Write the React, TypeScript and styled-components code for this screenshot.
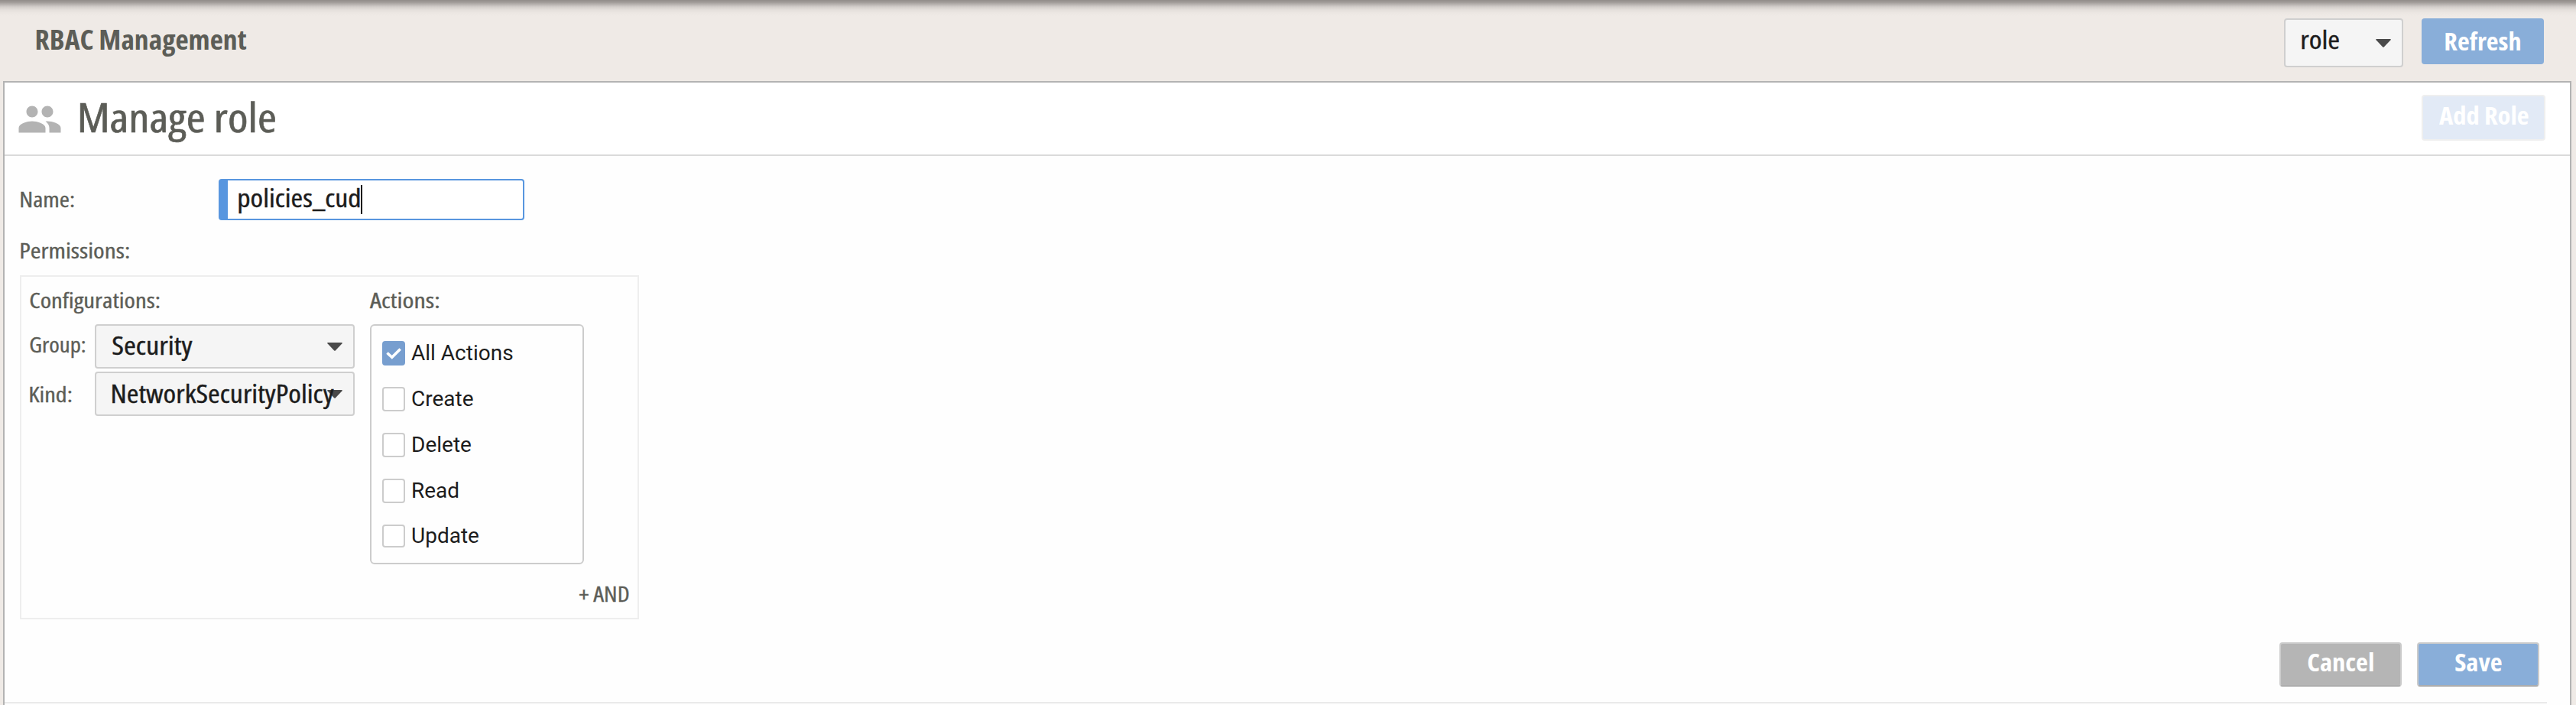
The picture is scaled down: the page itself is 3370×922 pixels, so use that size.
import React, { useLayoutEffect, useRef, useState } from 'react';
import styled, { createGlobalStyle, css } from 'styled-components';

const GlobalStyle = createGlobalStyle`
  *, *::before, *::after { box-sizing: border-box; }
  html, body { margin: 0; padding: 0; }
  body {
    background: #efeae6;
    color: #5c5d57;
    font-family: 'Open Sans', 'Noto Sans', sans-serif;
    overflow: hidden;
  }
`;

/* ---------- condensed text ---------- */

const Slot = styled.span<{ $width: number; $lift?: number }>`
  display: block;
  flex: none;
  width: ${(p) => p.$width}px;
  padding-bottom: ${(p) => p.$lift ?? 0}px;
  white-space: nowrap;
`;

const Glyphs = styled.span<{ $size: number; $weight: number }>`
  display: block;
  width: max-content;
  font-size: ${(p) => p.$size}px;
  font-weight: ${(p) => p.$weight};
  font-stretch: condensed;
  line-height: 1.3;
  transform-origin: 0 0;
  -webkit-text-stroke: ${(p) => (p.$weight < 600 ? p.$size * 0.012 : 0)}px currentColor;
`;

interface CondensedProps {
  children: string;
  width: number;
  size?: number;
  weight?: number;
  lift?: number;
}

/* Sets a line of text so that its glyphs span exactly `width` pixels. */
function Condensed({ children, width, size = 28, weight = 500, lift }: CondensedProps) {
  const ref = useRef<HTMLSpanElement>(null);
  const [fit, setFit] = useState({ scale: 1, left: 0 });

  useLayoutEffect(() => {
    const ctx = document.createElement('canvas').getContext('2d');
    if (!ctx || !ref.current) return;
    ctx.font = `${weight} ${size}px ${getComputedStyle(ref.current).fontFamily}`;
    const plain = ctx.measureText(children);
    const ratio = ref.current.offsetWidth / plain.width;
    const ink = (plain.actualBoundingBoxLeft + plain.actualBoundingBoxRight) * ratio;
    setFit({ scale: width / ink, left: plain.actualBoundingBoxLeft * ratio });
  }, [children, width, size, weight]);

  return (
    <Slot $width={width} $lift={lift}>
      <Glyphs
        ref={ref}
        $size={size}
        $weight={weight}
        style={{ transform: `scaleX(${fit.scale}) translateX(${fit.left}px)` }}
      >
        {children}
      </Glyphs>
    </Slot>
  );
}

/* ---------- page ---------- */

const Page = styled.div`
  display: flex;
  flex-direction: column;
  height: 922px;
  padding: 0 6px 0 4px;
  background: linear-gradient(
      to bottom,
      #918c89 0,
      #a09b98 3px,
      #b9b4b1 6px,
      #d3cecb 9px,
      #e4dfdb 13px,
      #ece7e3 17px,
      #efeae6 21px
    )
    #efeae6;
`;

const TopBar = styled.header`
  display: flex;
  flex: none;
  justify-content: space-between;
  height: 106px;
  padding: 24px 36px 0 44px;
`;

const TitleSlot = styled.div`
  display: flex;
  align-items: center;
  height: 56px;
`;

const TopActions = styled.div`
  display: flex;
  align-items: flex-start;
  gap: 24px;
`;

const Panel = styled.main`
  flex: 1;
  min-height: 0;
  background: #fefefe;
  border: 2px solid #b3b3b3;
  border-bottom: 0;
`;

const PanelHeader = styled.div`
  display: flex;
  align-items: flex-start;
  justify-content: space-between;
  height: 96px;
  padding: 16px 32px 0 16px;
  background: #fff;
  border-bottom: 2px solid #dadada;
`;

const PanelTitle = styled.div`
  display: flex;
  align-items: center;
  gap: 23px;
  height: 64px;
`;

const PeopleIcon = styled.svg`
  display: block;
  width: 60px;
  height: 60px;
  fill: #b3b3b3;
`;

const Form = styled.div`
  display: flex;
  flex-direction: column;
  width: 3326px;
  height: 716px;
  border-bottom: 2px solid #eaeaea;
`;

/* ---------- controls ---------- */

type Tone = 'primary' | 'outlined' | 'neutral' | 'disabled';

const tones = {
  primary: css`
    background: #89aed9;
  `,
  outlined: css`
    background: #89aed9;
    border: 2px solid #cbcbcb;
    border-bottom-color: #adadad;
  `,
  neutral: css`
    background: #b5b5b5;
    border: 2px solid #cbcbcb;
    border-bottom-color: #adadad;
  `,
  disabled: css`
    background: #e2eaf6;
    border: 2px solid #efefef;
  `,
};

const Button = styled.button<{ $tone: Tone; $width?: number; $height?: number }>`
  display: flex;
  align-items: center;
  justify-content: center;
  width: ${(p) => p.$width ?? 160}px;
  height: ${(p) => p.$height ?? 60}px;
  padding: 0;
  border: 0;
  border-radius: 4px;
  color: #fff;
  font-family: inherit;
  ${(p) => tones[p.$tone]}
`;

const SelectBox = styled.div<{ $width: number; $height: number }>`
  display: flex;
  align-items: center;
  justify-content: space-between;
  width: ${(p) => p.$width}px;
  height: ${(p) => p.$height}px;
  padding: 0 14px 0 21px;
  background: #f5f5f5;
  border: 2px solid #cfcfcf;
  border-radius: 4px;
  color: #1c1c1c;
`;

const Arrow = styled.svg`
  display: block;
  flex: none;
  width: 20px;
  height: 11px;
  margin-left: -20px;
  fill: #4a4a4a;
`;

const Caret = () => (
  <Arrow viewBox="0 0 20 11">
    <path d="M1 0h18q1.4.2.5 1.3L10.8 10.4q-.8.8-1.6 0L.5 1.3Q-.4.2 1 0z" />
  </Arrow>
);

const NameRow = styled.div`
  display: flex;
  align-items: center;
  height: 54px;
  margin-top: 30px;
  padding-left: 21px;
`;

const NameInput = styled.div`
  display: flex;
  align-items: center;
  width: 400px;
  height: 54px;
  margin-left: 189px;
  padding-left: 14px;
  background: #fff;
  border: 2px solid #5896df;
  border-left-width: 12px;
  border-radius: 4px;
  color: #1c1c1c;
`;

const Cursor = styled.i`
  width: 2px;
  height: 38px;
  margin-left: 1px;
  background: #111;
`;

const PermissionsRow = styled.div`
  display: flex;
  align-items: center;
  height: 72px;
  padding: 8px 0 0 21px;
`;

const PermissionBox = styled.section`
  display: flex;
  flex-direction: column;
  justify-content: space-between;
  width: 810px;
  height: 450px;
  margin-left: 20px;
  border: 2px solid #eee;
`;

const Columns = styled.div`
  display: flex;
`;

const ConfigColumn = styled.div`
  width: 456px;
  padding-left: 11px;
`;

const Heading = styled.div`
  display: flex;
  align-items: center;
  height: 62px;
`;

const ConfigRow = styled.div`
  display: flex;
  align-items: center;
  height: 58px;
  margin-bottom: 4px;
`;

const ConfigLabel = styled.div`
  width: 85px;
`;

const ActionsList = styled.div`
  width: 280px;
  height: 314px;
  padding: 20px 14px;
  border: 2px solid #ccc;
  border-radius: 6px;
`;

const ActionRow = styled.div`
  display: flex;
  align-items: flex-start;
  gap: 8px;
  height: 60px;
  color: #1c1c1c;
  font-family: Roboto, sans-serif;
  font-size: 28px;
  line-height: 32px;

  &:last-child {
    line-height: 30px;
  }
`;

const Box = styled.span<{ $checked: boolean; $short: boolean }>`
  display: flex;
  align-items: center;
  justify-content: center;
  width: 30px;
  height: ${(p) => (p.$short ? 30 : 32)}px;
  border: 2px solid ${(p) => (p.$checked ? '#779ecf' : '#ccc')};
  border-radius: 4px;
  background: ${(p) => (p.$checked ? '#779ecf' : '#fff')};
`;

const Check = styled.svg`
  display: block;
  flex: none;
  width: 20px;
  height: 15px;
  fill: none;
  stroke: #fff;
  stroke-width: 3.6;
`;

const AndRow = styled.div`
  display: flex;
  justify-content: flex-end;
  padding: 0 11px 14px 0;
`;

const Footer = styled.div`
  display: flex;
  justify-content: flex-end;
  gap: 20px;
  margin-top: 30px;
  padding-right: 10px;
`;

const actions: { name: string; checked?: boolean }[] = [
  { name: 'All Actions', checked: true },
  { name: 'Create' },
  { name: 'Delete' },
  { name: 'Read' },
  { name: 'Update' },
];

export default function App() {
  return (
    <>
      <GlobalStyle />
      <Page>
        <TopBar>
          <TitleSlot>
            <Condensed width={274} size={36} weight={700}>RBAC Management</Condensed>
          </TitleSlot>
          <TopActions>
            <SelectBox $width={156} $height={64}>
              <Condensed width={49} size={33} lift={8}>role</Condensed>
              <Caret />
            </SelectBox>
            <Button $tone="primary">
              <Condensed width={98} size={32.5} weight={700}>Refresh</Condensed>
            </Button>
          </TopActions>
        </TopBar>
        <Panel>
          <PanelHeader>
            <PanelTitle>
              <PeopleIcon viewBox="0 0 24 24">
                <path d="M16 11c1.66 0 2.99-1.34 2.99-3S17.66 5 16 5c-1.66 0-3 1.34-3 3s1.34 3 3 3zm-8 0c1.66 0 2.99-1.34 2.99-3S9.66 5 8 5C6.34 5 5 6.34 5 8s1.34 3 3 3zm0 2c-2.33 0-7 1.17-7 3.5V19h14v-2.5c0-2.33-4.67-3.5-7-3.5zm8 0c-.29 0-.62.02-.97.05 1.16.84 1.97 1.97 1.97 3.45V19h6v-2.5c0-2.33-4.67-3.5-7-3.5z" />
              </PeopleIcon>
              <Condensed width={255} size={52} lift={7}>Manage role</Condensed>
            </PanelTitle>
            <Button $tone="disabled" $width={162}>
              <Condensed width={117} size={32.5} weight={700} lift={5}>Add Role</Condensed>
            </Button>
          </PanelHeader>
          <Form>
            <NameRow>
              <Condensed width={70} lift={2}>Name:</Condensed>
              <NameInput>
                <Condensed width={159} size={33} lift={3}>policies_cud</Condensed>
                <Cursor />
              </NameInput>
            </NameRow>
            <PermissionsRow>
              <Condensed width={142} lift={1}>Permissions:</Condensed>
            </PermissionsRow>
            <PermissionBox>
              <Columns>
                <ConfigColumn>
                  <Heading>
                    <Condensed width={170} lift={1}>Configurations:</Condensed>
                  </Heading>
                  <ConfigRow>
                    <ConfigLabel>
                      <Condensed width={73} lift={6}>Group:</Condensed>
                    </ConfigLabel>
                    <SelectBox $width={340} $height={58}>
                      <Condensed width={105} size={32.5} lift={1}>Security</Condensed>
                      <Caret />
                    </SelectBox>
                  </ConfigRow>
                  <ConfigRow>
                    <ConfigLabel>
                      <Condensed width={55}>Kind:</Condensed>
                    </ConfigLabel>
                    <SelectBox $width={340} $height={58}>
                      <Condensed width={290} size={32.5}>NetworkSecurityPolicy</Condensed>
                      <Caret />
                    </SelectBox>
                  </ConfigRow>
                </ConfigColumn>
                <div>
                  <Heading>
                    <Condensed width={90} lift={1}>Actions:</Condensed>
                  </Heading>
                  <ActionsList>
                    {actions.map((a, i) => (
                      <ActionRow key={a.name}>
                        <Box $checked={!!a.checked} $short={i === actions.length - 1}>
                          {a.checked && (
                            <Check viewBox="0 0 20 15">
                              <path d="M1.5 6.5L7.8 12.3L18.7 1.5" />
                            </Check>
                          )}
                        </Box>
                        <span>{a.name}</span>
                      </ActionRow>
                    ))}
                  </ActionsList>
                </div>
              </Columns>
              <AndRow>
                <Condensed width={65}>+ AND</Condensed>
              </AndRow>
            </PermissionBox>
            <Footer>
              <Button $tone="neutral" $height={58}>
                <Condensed width={86} size={32.5} weight={700} lift={6}>Cancel</Condensed>
              </Button>
              <Button $tone="outlined" $height={58}>
                <Condensed width={61} size={32.5} weight={700} lift={6}>Save</Condensed>
              </Button>
            </Footer>
          </Form>
        </Panel>
      </Page>
    </>
  );
}
